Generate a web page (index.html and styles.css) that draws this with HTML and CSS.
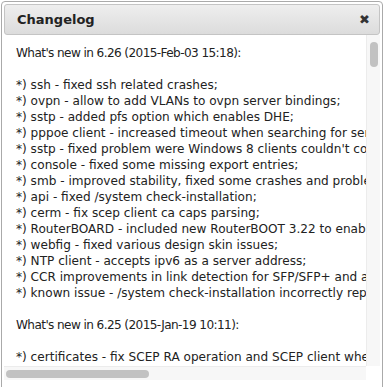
FILE: index.html
```html
<!DOCTYPE html>
<html>

<head>
  <title>Changelog</title>
  <link rel="stylesheet" href="styles.css">
</head>

<body>
  <div class="dialog">
    <div class="dialog-head">
      <span class="dialog-title">Changelog</span>
      <span class="dialog-close">&#10006;</span>
    </div>
    <div class="dialog-body">
      <div class="viewport">
        <pre class="log"><span class="ver">What's new in 6.26 (2015-Feb-03 15:18):</span>

*) ssh - fixed ssh related crashes;
*) ovpn - allow to add VLANs to ovpn server bindings;
*) sstp - added pfs option which enables DHE;
*) pppoe client - increased timeout when searching for servers;
*) sstp - fixed problem were Windows 8 clients couldn't connect;
*) console - fixed some missing export entries;
*) smb - improved stability, fixed some crashes and problems with some clients;
*) api - fixed /system check-installation;
*) cerm - fix scep client ca caps parsing;
*) RouterBOARD - included new RouterBOOT 3.22 to enable booting from NAND on some boards;
*) webfig - fixed various design skin issues;
*) NTP client - accepts ipv6 as a server address;
*) CCR improvements in link detection for SFP/SFP+ and also for combo ports;
*) known issue - /system check-installation incorrectly reports that installation is damaged after an upgrade;

<span class="ver">What's new in 6.25 (2015-Jan-19 10:11):</span>

*) certificates - fix SCEP RA operation and SCEP client when CA certificate is used for signing;
*) ipsec - fixed policy generation for transport mode;
</pre>
      </div>
      <div class="vbar">
        <div class="vthumb"></div>
      </div>
      <div class="hbar">
        <div class="hthumb"></div>
      </div>
      <div class="corner"></div>
    </div>
  </div>
</body>

</html>
```

FILE: styles.css
```css
* {
  box-sizing: border-box;
}

body {
  margin: 0;
  background: white;
  font-family: "DejaVu Sans", Verdana, sans-serif;
  color: #222;
}

.dialog {
  margin: 1px 0 0 1px;
  width: 382px;
  height: 400px;
  border: 1px solid #aaa;
  border-radius: 4px;
  padding: 2px;
  background: white;
}

.dialog-head {
  display: flex;
  align-items: center;
  justify-content: space-between;
  height: 31px;
  padding: 0 9px 0 12px;
  border: 1px solid #c4c4c4;
  border-radius: 3px;
  background: linear-gradient(#eeeeee, #dcdcdc);
}

.dialog-title {
  font-weight: bold;
  font-size: 13px;
  color: #222;
}

.dialog-close {
  font-size: 13px;
  color: #333;
}

/* fake scrollbars, headless hides the real ones */
.dialog-body {
  display: grid;
  grid-template-columns: 1fr 14px;
  grid-template-rows: 331px 14px;
}

.viewport {
  overflow: hidden;
}

.log {
  margin: 0;
  padding: 10px 0 0 12px;
  font-family: "DejaVu Sans", Verdana, sans-serif;
  font-size: 12.1px;
  line-height: 16px;
  white-space: pre;
}

.ver {
  letter-spacing: -0.6px;
}

.vbar {
  background: #f7f7f7;
  border-left: 1px solid #ececec;
  padding: 7px 0 0 3px;
}

.vthumb {
  width: 8px;
  height: 25px;
  border-radius: 4px;
  background: #c2c2c2;
}

.hbar {
  background: #f7f7f7;
  border-top: 1px solid #ececec;
  padding: 3px 0 0 2px;
}

.hthumb {
  width: 143px;
  height: 8px;
  border-radius: 4px;
  background: #c2c2c2;
}

.corner {
  background: white;
}
```
